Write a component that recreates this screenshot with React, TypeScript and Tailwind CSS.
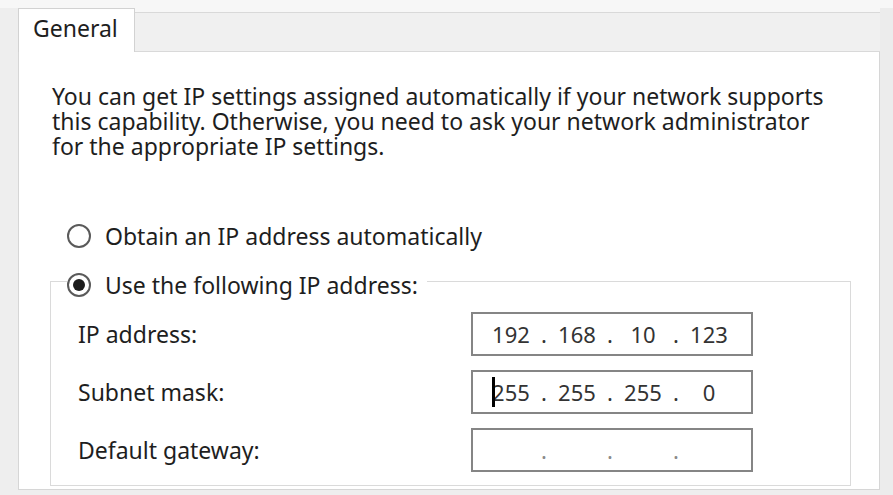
import React from "react";

function Radio({ checked }: { checked?: boolean }) {
  return (
    <span className="w-[24px] h-[24px] rounded-full border-2 border-[#5a5a5a] bg-white flex items-center justify-center shrink-0">
      {checked ? <span className="w-[12px] h-[12px] rounded-full bg-[#1c1c1c]" /> : null}
    </span>
  );
}

function IpBox({ values, caret, empty }: { values: string[]; caret?: boolean; empty?: boolean }) {
  return (
    <div className="w-[282px] h-[44px] border-2 border-[#858585] bg-white flex items-center pl-[14px] text-[22px] leading-[25px] text-[#333]">
      {values.map((v, i) => (
        <React.Fragment key={i}>
          {i > 0 ? (
            <span className={"w-[18px] text-center " + (empty ? "text-[#8a8a8a]" : "")}>.</span>
          ) : null}
          <span className="w-[48px] text-center relative">
            {v}
            {caret && i === 0 ? (
              <span className="absolute left-[5px] top-[-3px] w-[3px] h-[30px] bg-black" />
            ) : null}
          </span>
        </React.Fragment>
      ))}
    </div>
  );
}

export default function App() {
  return (
    <div className="w-[893px] h-[495px] overflow-hidden bg-[#eeeeee] flex flex-col font-['Noto_Sans',sans-serif] text-[#1e1e1e]">
      <div className="h-[8px] shrink-0 bg-[#f7f7f7]" />
      <div className="flex flex-1 min-h-0">
        <div className="w-[18px] shrink-0" />
        <div className="w-[862px] shrink-0 flex flex-col">
          <div className="flex h-[44px] shrink-0">
            <div className="w-[117px] bg-white border-l border-t border-r border-[#d2d2d2] pl-[14px] pt-[7px] text-[23px] leading-[25px]">
              General
            </div>
            <div className="flex-1 flex flex-col">
              <div className="h-[4px] bg-[#f7f7f7]" />
              <div className="flex-1 bg-[#f0f0f0] border-t border-b border-[#d9d9d9]" />
            </div>
          </div>
          <div className="h-[438px] shrink-0 bg-white border-l border-r border-b border-[#d6d6d6] pl-[31px] pt-[32px] text-[23px] leading-[25px]">
            <p className="pl-[2px] whitespace-nowrap">
              You can get IP settings assigned automatically if your network supports
              <br />
              this capability. Otherwise, you need to ask your network administrator
              <br />
              for the appropriate IP settings.
            </p>
            <div className="mt-[64px] ml-[17px] h-[26px] flex items-center gap-[14px]">
              <Radio />
              <span>Obtain an IP address automatically</span>
            </div>
            <fieldset className="mt-[15px] w-[801px] border border-[#dadada]">
              <legend className="ml-[16px] pt-[8px] pr-[9px] h-[34px]">
                <span className="h-[26px] flex items-center gap-[14px]">
                  <Radio checked />
                  <span>Use the following IP address:</span>
                </span>
              </legend>
              <div className="pt-[14px] pb-[13px] pl-[27px] flex flex-col gap-[14px]">
                <div className="flex items-center">
                  <span className="w-[393px]">IP address:</span>
                  <IpBox values={["192", "168", "10", "123"]} />
                </div>
                <div className="flex items-center">
                  <span className="w-[393px]">Subnet mask:</span>
                  <IpBox values={["255", "255", "255", "0"]} caret />
                </div>
                <div className="flex items-center">
                  <span className="w-[393px]">Default gateway:</span>
                  <IpBox values={["", "", "", ""]} empty />
                </div>
              </div>
            </fieldset>
          </div>
        </div>
        <div className="flex-1 bg-[#ececec]" />
      </div>
    </div>
  );
}
